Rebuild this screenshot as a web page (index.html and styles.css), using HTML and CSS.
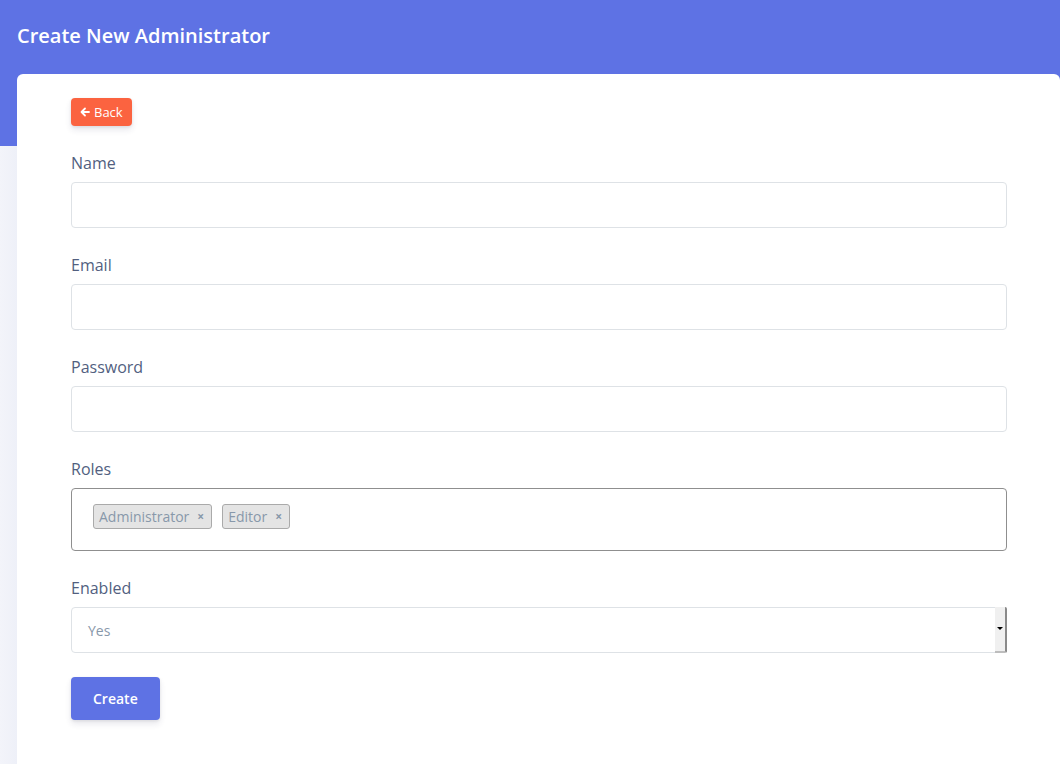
FILE: index.html
```html
<!DOCTYPE html>
<html lang="en">
<head>
    <meta charset="UTF-8">
    <meta name="viewport" content="width=device-width, initial-scale=1.0">
    <title>Create New Administrator</title>
    <link rel="stylesheet" href="styles.css">
</head>
<body>
    <header class="page-header">
        <h1>Create New Administrator</h1>
    </header>

    <main class="page-body">
        <div class="card">
            <a href="#" class="btn btn-back">
                <svg class="arrow-left" viewBox="0 0 10 10" width="10" height="10">
                    <path d="M9 5H2M5 1.5L1.5 5 5 8.5" fill="none" stroke="#fff" stroke-width="1.8" stroke-linecap="round" stroke-linejoin="round"/>
                </svg>
                Back
            </a>

            <form class="admin-form" onsubmit="return false">
                <div class="form-group">
                    <label for="name">Name</label>
                    <input type="text" id="name" class="form-control">
                </div>

                <div class="form-group">
                    <label for="email">Email</label>
                    <input type="email" id="email" class="form-control">
                </div>

                <div class="form-group">
                    <label for="password">Password</label>
                    <input type="password" id="password" class="form-control">
                </div>

                <div class="form-group">
                    <label>Roles</label>
                    <div class="tag-select">
                        <span class="tag">Administrator <span class="tag-remove">×</span></span>
                        <span class="tag">Editor <span class="tag-remove">×</span></span>
                    </div>
                </div>

                <div class="form-group">
                    <label for="enabled">Enabled</label>
                    <div class="select-box">
                        <span class="select-value">Yes</span>
                        <span class="select-arrow"><span class="caret"></span></span>
                    </div>
                </div>

                <button type="submit" class="btn btn-create">Create</button>
            </form>
        </div>
    </main>
</body>
</html>
```

FILE: styles.css
```css
/* Admin form page */
* {
    margin: 0;
    padding: 0;
    box-sizing: border-box;
}

body {
    font-family: "Open Sans", Arial, sans-serif;
    background: linear-gradient(90deg, #f3f4fa 0%, #eef0f8 17px, #f8f9fe 17px);
    color: #525f7f;
    min-height: 100vh;
}

.page-header {
    background-color: #5e72e4;
    height: 146px;
    padding: 23px 17px 0;
}

.page-header h1 {
    color: #fff;
    font-size: 20px;
    font-weight: 600;
    line-height: 26px;
}

.page-body {
    margin-top: -72px;
    padding-left: 17px;
}

.card {
    background-color: #fff;
    border-radius: 6px 6px 0 0;
    padding: 24px 53px 40px 54px;
    min-height: 690px;
}

.btn {
    display: inline-flex;
    align-items: center;
    border: none;
    border-radius: 4px;
    color: #fff;
    text-decoration: none;
    font-family: inherit;
    cursor: pointer;
    box-shadow: 0 4px 6px rgba(50, 50, 93, .11), 0 1px 3px rgba(0, 0, 0, .08);
}

.btn-back {
    background-color: #fb6340;
    height: 28px;
    padding: 0 9px;
    font-size: 13px;
    font-weight: 500;
    gap: 4px;
    margin-bottom: 26px;
}

.arrow-left {
    display: block;
}

.form-group {
    margin-bottom: 26px;
}

.form-group label {
    display: block;
    font-size: 16px;
    line-height: 22px;
    margin-bottom: 8px;
    color: #525f7f;
}

.form-control,
.select-box {
    display: block;
    width: 100%;
    height: 46px;
    border: 1px solid #dee2e6;
    border-radius: 4px;
    background-color: #fff;
    font-family: inherit;
    font-size: 14px;
    padding: 0 16px;
    color: #8898aa;
}

.tag-select {
    height: 63px;
    border: 1px solid #8f8f8f;
    border-radius: 4px;
    padding: 15px 21px;
    display: flex;
    align-items: flex-start;
    gap: 10px;
}

.tag {
    display: inline-flex;
    align-items: center;
    height: 25px;
    padding: 0 7px 0 5px;
    background-color: #e4e4e4;
    border: 1px solid #aaa;
    border-radius: 3px;
    font-size: 14px;
    color: #8898aa;
    gap: 8px;
}

.tag-remove {
    font-size: 12px;
    font-weight: 700;
    color: #8898aa;
}

.select-box {
    display: flex;
    align-items: center;
    justify-content: space-between;
    padding: 0 0 0 16px;
}

.select-arrow {
    width: 12px;
    height: 46px;
    margin-top: -1px;
    margin-right: -1px;
    background-color: #f0f0f0;
    border-right: 2px solid #8a8a8a;
    border-bottom: 2px solid #bdbdbd;
    border-radius: 0 2px 2px 0;
    display: flex;
    align-items: center;
    justify-content: center;
}

.caret {
    width: 0;
    height: 0;
    border-left: 3px solid transparent;
    border-right: 3px solid transparent;
    border-top: 3px solid #000;
}

.btn-create {
    background-color: #5e72e4;
    height: 43px;
    padding: 0 22px;
    font-size: 14px;
    font-weight: 600;
    margin-top: -2px;
}
```
